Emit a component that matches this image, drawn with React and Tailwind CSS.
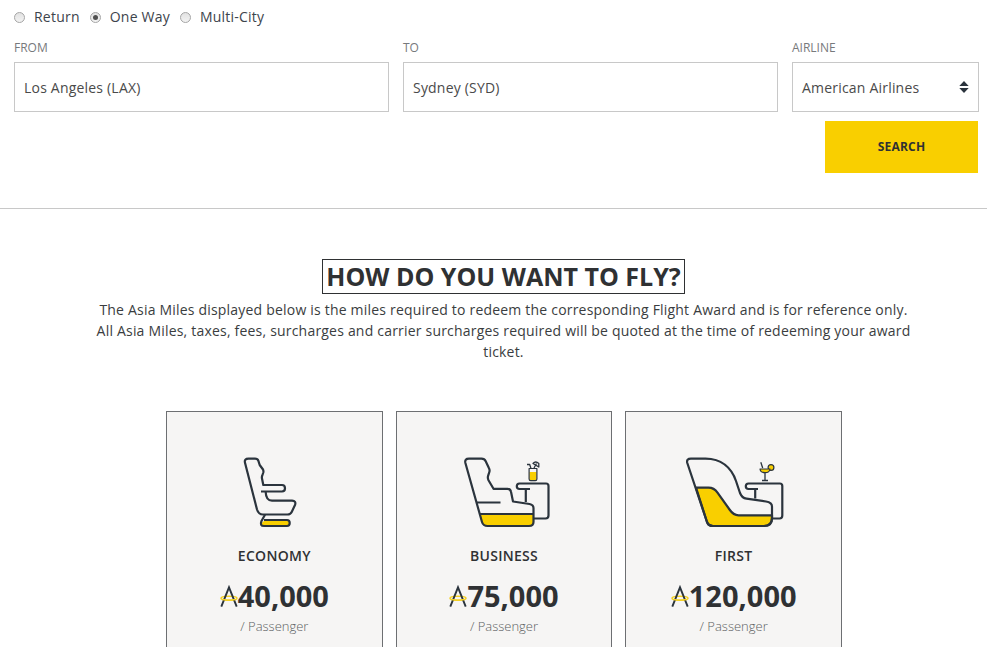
const trips = ["Return", "One Way", "Multi-City"];

const cabins = [
  { id: "economy", nombre: "ECONOMY", miles: "40,000", icono: EconomySeat },
  { id: "business", nombre: "BUSINESS", miles: "75,000", icono: BusinessSeat },
  { id: "first", nombre: "FIRST", miles: "120,000", icono: FirstSeat },
];

function SeatIcon({ viewBox, children }) {
  return (
    <svg
      width="120"
      height="95"
      viewBox={viewBox}
      fill="none"
      stroke="#2b343d"
      strokeWidth="2.2"
      strokeLinejoin="round"
      className="shrink-0"
    >
      {children}
    </svg>
  );
}

function EconomySeat() {
  return (
    <SeatIcon viewBox="-16 0 120 95">
      <path d="M34.5 75.5H57q2.5 0 2.5 2.5T57 80.500H34q-2.500 0-2.200-2.500z" fill="#f9cf00" stroke="none" />
      <path d="M31 46.500H52q3 0 3-3.250T52 40H33.300L32 33.500q-.4-1.500.3-3l1-3q.4-1.500-.3-3L29.700 20L28.400 15.800Q27.600 13.700 25 13.700H18.500q-4.500 0-3.500 4L27 64.500q1.500 5 6 5H57.500q3 0 4.200-2.500L65 60q1.500-4-3-4.300H42q-6-.2-6.300-8.500" />
      <path d="M35 69.800L31.500 76q-2 5 2.500 5H57q2.700 0 2.700-3T57 75H34" />
    </SeatIcon>
  );
}

function BusinessSeat() {
  return (
    <SeatIcon viewBox="-6.5 0 120 95">
      <path d="M29 69H83V77q0 4-4.500 4H37q-4.300 0-5.500-4z" fill="#f9cf00" stroke="none" />
      <path d="M18.500 13.700H31q3 0 4.200 2.500l3.300 7q1 2 .3 4l-1.300 4q-.5 2 .5 4l5 8.600H57q3 0 3.500 3l2 9.700L79 59q4 .8 4 4V77q0 4-4.500 4H37q-4.300 0-5.500-4L14.900 18q-1-4.300 3.600-4.300z" />
      <path d="M26.500 57.500H50M29 69H83" />
      <path d="M83 73.500H95q3 0 3-3V41q0-2.500-2.500-2.500H69q-2.700 0-2.700 2.700T69 44H79.500M75.300 44V57" />
      <path d="M79 27H86V34q0 1.300-1.300 1.300H80.300Q79 35.300 79 34z" fill="#f9cf00" stroke="none" />
      <path d="M78.600 23.500H86.400V34q0 1.600-1.600 1.600H80.200q-1.600 0-1.600-1.600z" strokeWidth="1.200" />
      <path d="M80.500 23.500L79.200 19.500H76.500M83.500 23L86 18.500M82.500 18.500Q85 15.500 88.300 18.500V22Z" strokeWidth="1.300" />
    </SeatIcon>
  );
}

function FirstSeat() {
  return (
    <SeatIcon viewBox="-1.5 0 120 95">
      <path
        d="M20.500 42.700H33q5.500 0 9 5L54 64.500q4 5.800 9 5.800H96.500V73q0 8-8 8H37.500q-4.500 0-6-4z"
        fill="#f9cf00"
      />
      <path d="M15.500 13.700H30C46 13.700 56 23 60.500 36l4 12q2 5 6.500 5.700l19.500 2.800q6 1 6 5V73q0 8-8 8H37.500q-4.500 0-6-4L11.800 18q-1.200-4.300 3.700-4.300z" />
      <path d="M96.500 73.500H104q2.800 0 2.800-3V41q0-2.500-2.500-2.500H73q-2.700 0-2.700 2.700T73 44H82.500M79.700 44V53.500" />
      <circle cx="95.500" cy="22.500" r="2.900" fill="#f9cf00" strokeWidth="1.200" />
      <path d="M84.500 24H94.500Q94 27.700 89.500 27.700T84.500 24z" fill="#f9cf00" strokeWidth="1.200" />
      <path d="M89.500 28V35.300M86.500 35.500H92.500M87.200 23L85.300 17.300" strokeWidth="1.300" />
    </SeatIcon>
  );
}

function MilesSymbol() {
  return (
    <svg width="18" height="23" viewBox="0 0 18 23" fill="none" className="shrink-0">
      <ellipse cx="9" cy="13.200" rx="8" ry="2" stroke="#f4d022" strokeWidth="1.500" />
      <path d="M1.300 21.700L9 2.300L16.700 21.700" stroke="#2b343d" strokeWidth="1.900" />
      <path d="M2.500 14.600Q9 16.100 15.500 14.600" stroke="#f4d022" strokeWidth="1.500" />
    </svg>
  );
}

function Radio({ label, checked }) {
  return (
    <label className="flex items-center">
      <span className="flex size-[11px] items-center justify-center rounded-full border border-[#a5a5a5] bg-linear-to-b from-[#e2e2e2] to-[#f3f3f3]">
        {checked && <span className="size-[5px] rounded-full bg-[#505050]" />}
      </span>
      <span className="ml-[9px] text-[14px] leading-5 tracking-[0.22px] text-[#3d444c]">{label}</span>
    </label>
  );
}

function Field({ label, value, className, children }) {
  return (
    <div className={className}>
      <div className="h-[22px] text-[12px] leading-4 text-[#77797c]">{label}</div>
      <div className="flex h-[50px] items-center justify-between border border-[#c8c8c8] pr-[9px] pl-[9px]">
        <span className="text-[14px] tracking-[0.2px] text-[#4a4a4a]">{value}</span>
        {children}
      </div>
    </div>
  );
}

export default function App() {
  return (
    <div className="h-[647px] w-[987px] overflow-hidden bg-white font-['Open_Sans',sans-serif] text-[#2f3133]">
      {/* Search form */}
      <div className="h-[209px] border-b border-[#c8c8c8] pt-[7px] pl-[14px]">
        <div className="flex h-5 items-center gap-[10px]">
          {trips.map((trip) => (
            <Radio key={trip} label={trip} checked={trip === "One Way"} />
          ))}
        </div>

        <div className="mt-[13px] flex gap-[14px]">
          <Field label="FROM" value="Los Angeles (LAX)" className="w-[375px]" />
          <Field label="TO" value="Sydney (SYD)" className="w-[375px]" />
          <Field label="AIRLINE" value="American Airlines" className="w-[187px]">
            <svg width="10" height="12" viewBox="0 0 10 12" fill="#2b343d">
              <path d="M5 0L9.700 5H.3zM.3 7H9.700L5 12z" />
            </svg>
          </Field>
        </div>

        <div className="mt-[9px] flex justify-end pr-[9px]">
          <button className="h-[52px] w-[153px] bg-[#f9cf00] text-[12px] font-bold tracking-[0.2px]">SEARCH</button>
        </div>
      </div>

      {/* Heading */}
      <div className="flex flex-col items-center pt-[50px] pl-5 text-center">
        <h1 className="flex h-[35px] w-[363px] items-center justify-center border border-[#2f3133] text-[25px] font-bold whitespace-nowrap">
          HOW DO YOU WANT TO FLY?
        </h1>
        <p className="mt-[5px] text-[14px] leading-[21px] tracking-[0.2px] whitespace-nowrap text-[#3a3d40]">
          The Asia Miles displayed below is the miles required to redeem the corresponding Flight Award and is for reference only.
          <br />
          All Asia Miles, taxes, fees, surcharges and carrier surcharges required will be quoted at the time of redeeming your award
          <br />
          ticket.
        </p>
      </div>

      {/* Cabin classes */}
      <div className="mt-[49px] ml-[166px] grid w-[676px] grid-cols-3 gap-[13px]">
        {cabins.map((item) => (
          <div
            key={item.id}
            className="flex h-[280px] flex-col items-center border border-[#6d6f72] bg-[#f6f5f4] pt-[33px]"
          >
            <item.icono />
            <h3 className="mt-[6px] text-[14px] leading-5 font-semibold tracking-[0.3px]">{item.nombre}</h3>
            <div className="mt-[10px] flex h-10 items-center">
              <MilesSymbol />
              <span className="text-[29px] leading-10 font-bold">{item.miles}</span>
            </div>
            <div className="text-[13px] leading-5 font-light text-[#5c5f62]">/ Passenger</div>
          </div>
        ))}
      </div>
    </div>
  );
}
